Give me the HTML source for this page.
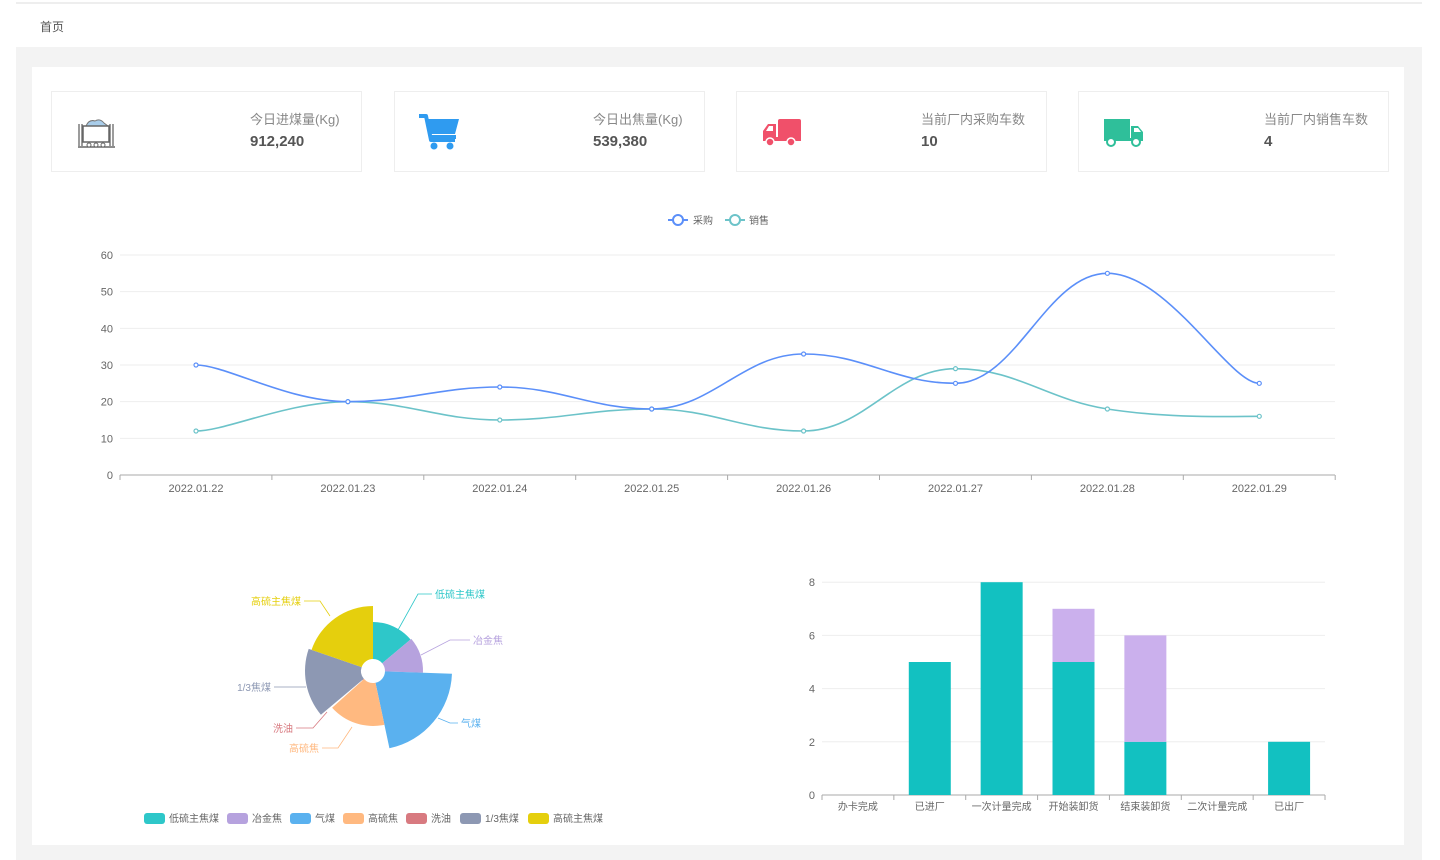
<!DOCTYPE html>
<html><head><meta charset="utf-8">
<style>
*{margin:0;padding:0;box-sizing:border-box}
body{width:1440px;height:860px;background:#fff;font-family:"Liberation Sans","Noto Sans CJK SC",sans-serif;position:relative;overflow:hidden}
.topline{position:absolute;left:16px;top:2px;width:1406px;height:2px;background:#eee}
.crumb{position:absolute;left:40px;top:18px;font-size:12px;color:#555}
.gray{position:absolute;left:16px;top:47px;width:1406px;height:813px;background:#f3f3f3}
.panel{position:absolute;left:32px;top:67px;width:1372px;height:778px;background:#fff}
.card{position:absolute;top:91px;width:311px;height:81px;border:1px solid #eee;background:#fff}
.card .t{position:absolute;left:198px;top:17px;font-size:13px;color:#888;white-space:nowrap}
.card .v{position:absolute;left:198px;top:41px;font-size:15px;font-weight:bold;color:#555}
.card svg{position:absolute}
svg text{font-family:"Liberation Sans","Noto Sans CJK SC",sans-serif}
</style></head><body>
<div class="topline"></div>
<div class="crumb">首页</div>
<div class="gray"></div>
<div class="panel"></div>

<div class="card" style="left:51px">
 <svg style="left:22px;top:22px" width="44" height="40" viewBox="0 0 44 40">
  <path d="M12 12 Q15 5 21 7 Q26 4 30 9 L34 12 Z" fill="#a9cdea" stroke="#777" stroke-width="1"/>
  <rect x="9" y="12" width="26" height="16" fill="#fff" stroke="#666" stroke-width="1.5"/>
  <path d="M5 10 V32 M8 10 V32 M36 10 V32 M39 10 V32" stroke="#666" stroke-width="1.3"/>
  <path d="M4 33 H41" stroke="#666" stroke-width="1.5"/>
  <circle cx="15" cy="31" r="2" fill="#fff" stroke="#666"/><circle cx="22" cy="31" r="2" fill="#fff" stroke="#666"/><circle cx="29" cy="31" r="2" fill="#fff" stroke="#666"/>
 </svg>
 <div class="t">今日进煤量(Kg)</div><div class="v">912,240</div>
</div>
<div class="card" style="left:394px">
 <svg style="left:22px;top:20px" width="44" height="40" viewBox="0 0 44 40">
  <path d="M2 4 H9 L14 28 H38" fill="none" stroke="#2f9bf0" stroke-width="4" stroke-linejoin="round"/>
  <path d="M9 7 H42 L38 22 H13 Z" fill="#2f9bf0"/>
  <rect x="12" y="23" width="27" height="4" fill="#2f9bf0"/>
  <circle cx="17" cy="34" r="3.5" fill="#2f9bf0"/><circle cx="33" cy="34" r="3.5" fill="#2f9bf0"/>
 </svg>
 <div class="t">今日出焦量(Kg)</div><div class="v">539,380</div>
</div>
<div class="card" style="left:736px">
 <svg style="left:24px;top:26px" width="44" height="30" viewBox="0 0 44 30">
  <rect x="17" y="1" width="23" height="20" rx="2" fill="#f0506a"/>
  <path d="M2 21 V13 L7 6 H15 V21 Z" fill="#f0506a"/>
  <path d="M5 13 L8 8 H12 V13 Z" fill="#fff"/>
  <rect x="2" y="19" width="38" height="4" fill="#f0506a"/>
  <circle cx="9" cy="24" r="4" fill="#f0506a" stroke="#fff" stroke-width="1.5"/><circle cx="30" cy="24" r="4" fill="#f0506a" stroke="#fff" stroke-width="1.5"/>
 </svg>
 <div class="t" style="left:184px">当前厂内采购车数</div><div class="v" style="left:184px">10</div>
</div>
<div class="card" style="left:1078px">
 <svg style="left:24px;top:26px" width="44" height="30" viewBox="0 0 44 30">
  <rect x="1" y="1" width="26" height="20" fill="#2fbf9a"/>
  <path d="M28 8 H35 L40 14 V22 H28 Z" fill="#2fbf9a"/>
  <path d="M31 10 H35 L38 14 H31 Z" fill="#fff"/>
  <rect x="1" y="20" width="39" height="3" fill="#2fbf9a"/>
  <circle cx="8" cy="24" r="4" fill="#fff" stroke="#2fbf9a" stroke-width="2"/><circle cx="33" cy="24" r="4" fill="#fff" stroke="#2fbf9a" stroke-width="2"/>
 </svg>
 <div class="t" style="left:185px">当前厂内销售车数</div><div class="v" style="left:185px">4</div>
</div>

<svg id="line" style="position:absolute;left:0;top:0" width="1440" height="860"></svg>

<script>
var s=document.getElementById('line'),h='';
function T(x,y,t,a,c,sz){return '<text x="'+x+'" y="'+y+'" font-size="'+(sz||11)+'" fill="'+(c||'#666')+'" text-anchor="'+(a||'middle')+'">'+t+'</text>';}
h+='<path d="M668 220 H688" stroke="#5b8ff9" stroke-width="2"/><circle cx="678" cy="220" r="5" fill="#fff" stroke="#5b8ff9" stroke-width="2"/>'+T(693,224,'采购','start','#666',10);
h+='<path d="M725 220 H745" stroke="#6cc3c9" stroke-width="2"/><circle cx="735" cy="220" r="5" fill="#fff" stroke="#6cc3c9" stroke-width="2"/>'+T(749,224,'销售','start','#666',10);
for(var i=0;i<=6;i++){var y=475-i*36.67;if(i>0)h+='<path d="M120 '+y+' H1335" stroke="#eee"/>';h+=T(113,y+4,i*10,'end');}
h+='<path d="M120 475 H1335" stroke="#aaa"/>';
for(var i=0;i<=8;i++){var x=120+i*151.9;h+='<path d="M'+x+' 475 V480" stroke="#aaa"/>';}
var d=['2022.01.22','2022.01.23','2022.01.24','2022.01.25','2022.01.26','2022.01.27','2022.01.28','2022.01.29'];
for(var i=0;i<8;i++)h+=T(196+i*151.9,492,d[i]);
function curve(v,c){var p=v.map(function(a,i){return [196+i*151.9,475-a*3.667];});var str='M'+p[0];
 for(var i=0;i<p.length-1;i++){var p0=p[i-1]||p[i],p1=p[i],p2=p[i+1],p3=p[i+2]||p2,k=0.2;
  var c1=[p1[0]+(p2[0]-p0[0])*k,p1[1]+(p2[1]-p0[1])*k],c2=[p2[0]-(p3[0]-p1[0])*k,p2[1]-(p3[1]-p1[1])*k];
  if((p1[1]-p0[1])*(p2[1]-p1[1])<=0)c1[1]=p1[1];if((p2[1]-p1[1])*(p3[1]-p2[1])<=0)c2[1]=p2[1];
  str+=' C'+c1+' '+c2+' '+p2;}
 var o='<path d="'+str+'" fill="none" stroke="'+c+'" stroke-width="1.6"/>';
 p.forEach(function(q){o+='<circle cx="'+q[0]+'" cy="'+q[1]+'" r="2" fill="#fff" stroke="'+c+'" stroke-width="1.2"/>';});return o;}
h+=curve([12,20,15,18,12,29,18,16],'#6cc3c9');
h+=curve([30,20,24,18,33,25,55,25],'#5b8ff9');
// rose pie
var cx=373,cy=671,ri=12,cols=['#2ec7c9','#b6a2de','#5ab1ef','#ffb980','#d87a80','#8d98b3','#e5cf0d'],rs=[49,50,79,55,14,68,65];
var ang=[0,50,92,168,228,230,289,360];
var names=['低硫主焦煤','冶金焦','气煤','高硫焦','洗油','1/3焦煤','高硫主焦煤'];
function P(rr,a){a=a*Math.PI/180-Math.PI/2;return [cx+rr*Math.cos(a),cy+rr*Math.sin(a)];}
for(var i=0;i<7;i++){var a0=ang[i],a1=ang[i+1],r=rs[i],lg=(a1-a0)>180?1:0;
 h+='<path d="M'+P(ri,a0)+' L'+P(r,a0)+' A'+r+' '+r+' 0 '+lg+' 1 '+P(r,a1)+' L'+P(ri,a1)+' A'+ri+' '+ri+' 0 '+lg+' 0 '+P(ri,a0)+'Z" fill="'+cols[i]+'"/>';}
var L=[[398,630,418,594,432,594,'start',0],[421,655,450,640,470,640,'start',1],[438,718,450,723,458,723,'start',2],[352,727,338,748,322,748,'end',3],[327,712,313,728,296,728,'end',4],[306,687,290,687,274,687,'end',5],[330,616,320,601,304,601,'end',6]];
L.forEach(function(l){h+='<path d="M'+l[0]+' '+l[1]+' L'+l[2]+' '+l[3]+' H'+l[4]+'" fill="none" stroke="'+cols[l[7]]+'" stroke-width="0.8"/>'+T(l[4]+(l[6]=='start'?3:-3),l[5]+4,names[l[7]],l[6],cols[l[7]],10);});
var lx=[144,227,290,343,406,460,528];
for(var i=0;i<7;i++){h+='<rect x="'+lx[i]+'" y="813" width="21" height="11" rx="3" fill="'+cols[i]+'"/>'+T(lx[i]+25,822,names[i],'start','#666',10);}
var y0=795,u=26.6;
for(var i=0;i<=4;i++){var y=y0-i*2*u;if(i>0)h+='<path d="M822 '+y+' H1325" stroke="#eee"/>';h+=T(815,y+4,i*2,'end');}
h+='<path d="M822 795 H1325" stroke="#aaa"/>';
var bw=71.86,cats=['办卡完成','已进厂','一次计量完成','开始装卸货','结束装卸货','二次计量完成','已出厂'],a=[0,5,8,5,2,0,2],b=[0,0,0,2,4,0,0];
for(var i=0;i<=7;i++)h+='<path d="M'+(822+i*bw)+' 795 V800" stroke="#aaa"/>';
for(var i=0;i<7;i++){var cxb=822+bw*(i+.5);h+=T(cxb,810,cats[i],'middle','#666',10);
 if(a[i])h+='<rect x="'+(cxb-21)+'" y="'+(y0-a[i]*u)+'" width="42" height="'+(a[i]*u)+'" fill="#12c1c1"/>';
 if(b[i])h+='<rect x="'+(cxb-21)+'" y="'+(y0-(a[i]+b[i])*u)+'" width="42" height="'+(b[i]*u)+'" fill="#cbb0ed"/>';}
s.innerHTML=h;
</script>
</body></html>
